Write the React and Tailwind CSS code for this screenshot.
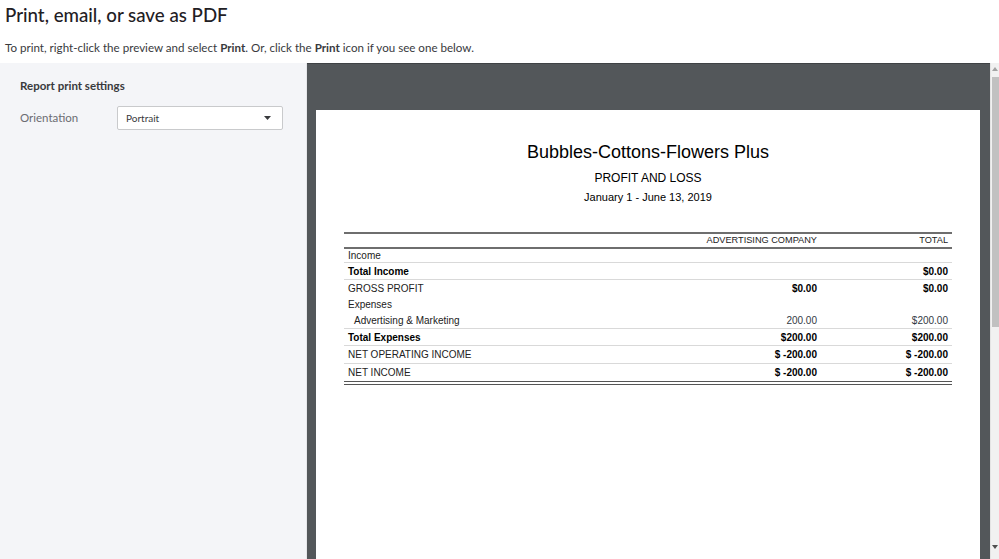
import React from "react";

const rows = [
  { label: "Income", h: "h-[14px]", border: "border-b border-[#d9d9d9]" },
  { label: "Total Income", bold: true, total: "$0.00", h: "h-[17px]", border: "border-b border-[#d9d9d9]" },
  { label: "GROSS PROFIT", company: "$0.00", total: "$0.00", valBold: true, h: "h-[16px]", border: "" },
  { label: "Expenses", h: "h-[16px]", border: "" },
  { label: "Advertising & Marketing", indent: true, company: "200.00", total: "$200.00", h: "h-[17px]", border: "border-b border-[#d9d9d9]" },
  { label: "Total Expenses", bold: true, company: "$200.00", total: "$200.00", h: "h-[17px]", border: "border-b border-[#d9d9d9]" },
  { label: "NET OPERATING INCOME", company: "$ -200.00", total: "$ -200.00", valBold: true, h: "h-[18px]", border: "border-b border-[#d9d9d9]" },
  { label: "NET INCOME", company: "$ -200.00", total: "$ -200.00", valBold: true, h: "h-[17px]", border: "" },
];

function Row({ r }) {
  const valCls = r.bold || r.valBold ? "font-bold text-black" : "text-[#333a44]";
  return (
    <div className={`flex items-center ${r.h} ${r.border}`}>
      <div
        className={`flex-1 ${r.indent ? "pl-[10px]" : "pl-[4px]"} ${
          r.bold ? "font-bold text-black" : "text-[#222]"
        }`}
      >
        {r.label}
      </div>
      <div className={`w-[200px] pr-[4px] text-right ${valCls}`}>{r.company || ""}</div>
      <div className={`w-[131px] pr-[4px] text-right ${valCls}`}>{r.total || ""}</div>
    </div>
  );
}

export default function App() {
  return (
    <div className="w-[999px] h-[559px] overflow-hidden bg-white flex flex-col font-['Lato',sans-serif]">
      <div className="pl-[5px] pt-[4px] h-[63px] shrink-0">
        <div className="text-[18.7px] leading-[22px] text-[#1f2024] font-medium">Print, email, or save as PDF</div>
        <div className="mt-[15px] text-[11.6px] leading-[14px] text-[#393a3d]">
          To print, right-click the preview and select <span className="font-bold">Print</span>. Or, click the{" "}
          <span className="font-bold">Print</span> icon if you see one below.
        </div>
      </div>

      <div className="flex flex-1 min-h-0">
        {/* left settings panel */}
        <div className="w-[307px] shrink-0 bg-[#f4f5f8] border-r border-[#e6e7ea] pl-[20px] pt-[16px]">
          <div className="text-[11.5px] leading-[14px] font-bold text-[#393a3d]">Report print settings</div>
          <div className="flex items-center mt-[13px]">
            <div className="w-[97px] text-[11.5px] text-[#6b6c72]">Orientation</div>
            <div className="w-[166px] h-[24px] bg-white border border-[#c9cacc] rounded-[2px] flex items-center justify-between pl-[8px] pr-[11px]">
              <span className="text-[10px] text-[#393a3d]">Portrait</span>
              <svg width="7" height="4" viewBox="0 0 7 4">
                <path d="M0 0 L7 0 L3.5 4 Z" fill="#393a3d" />
              </svg>
            </div>
          </div>
        </div>

        {/* preview area */}
        <div className="flex-1 bg-[#53575a] border-t border-[#3f4245] pl-[9px] pr-[10px] pt-[46px] flex min-w-0">
          <div className="flex-1 bg-white pt-[31px] px-[28px] font-['Liberation_Sans',Arial,sans-serif] text-[#111]">
            <div className="text-center text-[18px] leading-[22px] text-black">Bubbles-Cottons-Flowers Plus</div>
            <div className="text-center text-[12px] leading-[16px] mt-[7px] text-black">PROFIT AND LOSS</div>
            <div className="text-center text-[11px] leading-[14px] mt-[4px] text-black">January 1 - June 13, 2019</div>

            <div className="mt-[28px] text-[10px]">
              <div className="flex items-center h-[17px] border-t-2 border-b-2 border-[#6e6e6e] text-[#222] text-[9.2px]">
                <div className="flex-1"></div>
                <div className="w-[200px] pr-[4px] text-right">ADVERTISING COMPANY</div>
                <div className="w-[131px] pr-[4px] text-right">TOTAL</div>
              </div>
              {rows.map((r, i) => (
                <Row key={i} r={r} />
              ))}
              <div className="border-t-[4px] border-double border-[#555]"></div>
            </div>
          </div>
        </div>

        {/* scrollbar */}
        <div className="w-[9px] shrink-0 bg-[#f1f1f1] border-l border-[#e4e4e4] flex flex-col items-center">
          <svg width="6" height="4" viewBox="0 0 6 4" className="mt-[4px]">
            <path d="M0 4 L6 4 L3 0 Z" fill="#a3a3a3" />
          </svg>
          <div className="w-[7px] h-[250px] bg-[#c1c1c1] mt-[6px]"></div>
          <div className="flex-1"></div>
          <svg width="6" height="4" viewBox="0 0 6 4" className="mb-[10px]">
            <path d="M0 0 L6 0 L3 4 Z" fill="#505050" />
          </svg>
        </div>
      </div>
    </div>
  );
}
